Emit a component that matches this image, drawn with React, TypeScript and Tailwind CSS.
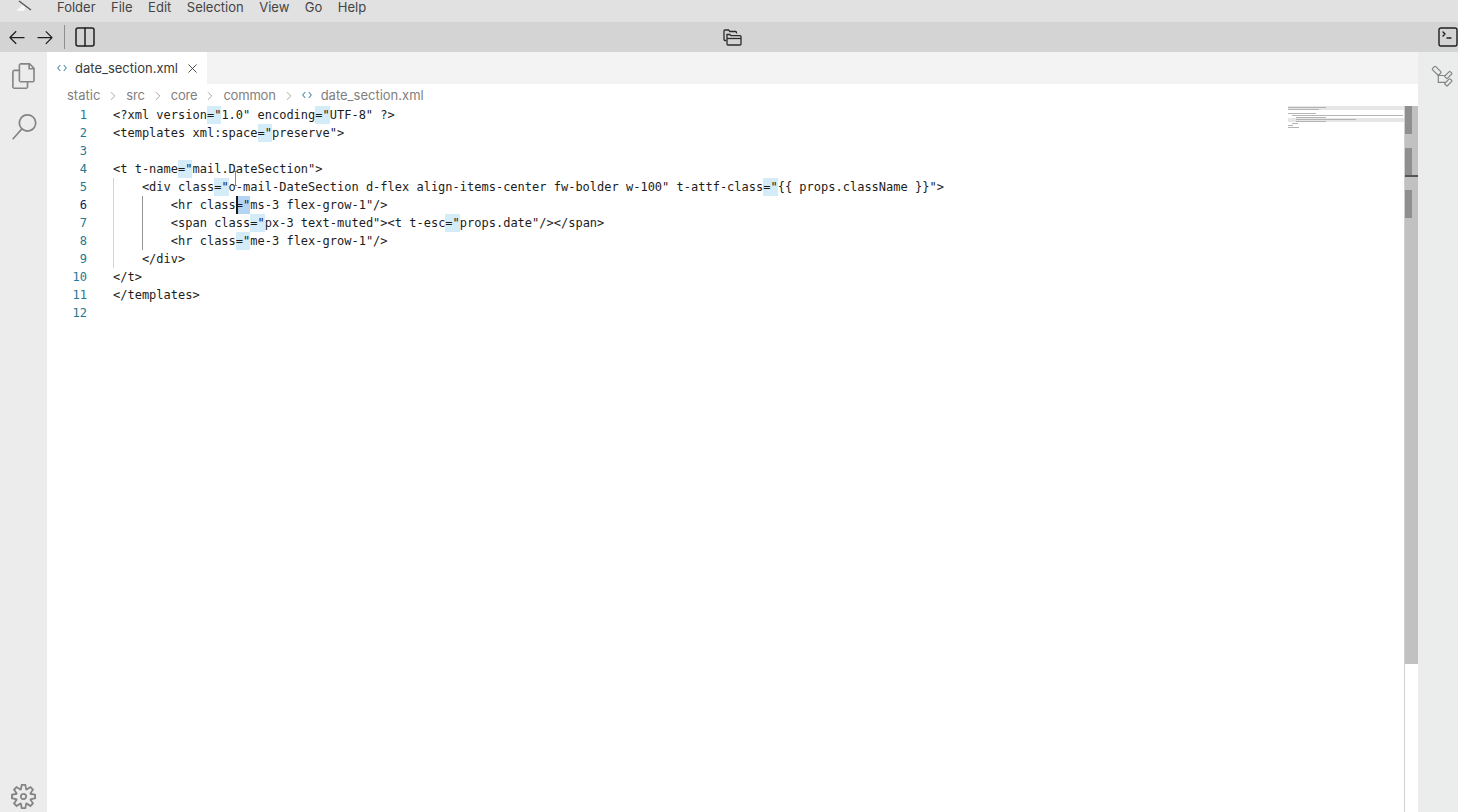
import { ChevronRight, X, Columns2, SquareTerminal } from "lucide-react";
import { VscArrowLeft, VscArrowRight, VscFiles, VscSearch, VscSettingsGear } from "react-icons/vsc";

const MENU_ITEMS = ["Folder", "File", "Edit", "Selection", "View", "Go", "Help"];
const CRUMBS = ["static", "src", "core", "common"];

// "~" marks the ="  token which gets the word highlight
const LINES = [
  `<?xml version~1.0" encoding~UTF-8" ?>`,
  `<templates xml:space~preserve">`,
  ``,
  `<t t-name~mail.DateSection">`,
  `    <div class~o-mail-DateSection d-flex align-items-center fw-bolder w-100" t-attf-class~{{ props.className }}">`,
  `        <hr class~ms-3 flex-grow-1"/>`,
  `        <span class~px-3 text-muted"><t t-esc~props.date"/></span>`,
  `        <hr class~me-3 flex-grow-1"/>`,
  `    </div>`,
  `</t>`,
  `</templates>`,
  ``,
];

const MINIMAP_ROWS = [
  "w-[38px]",
  "w-[31px]",
  "w-0",
  "w-[28px]",
  "ml-[4px] w-[111px]",
  "ml-[8px] w-[30px]",
  "ml-[8px] w-[60px]",
  "ml-[8px] w-[30px]",
  "ml-[4px] w-[6px]",
  "w-[5px]",
  "w-[11px]",
];

function CodeLine({ text, active }: { text: string; active: boolean }) {
  const parts = text.split("~");
  return (
    <span className="whitespace-pre">
      {parts.map((part, i) => (
        <span key={i}>
          {part}
          {i < parts.length - 1 && (
            <span className={active ? "bg-[#b5d3f3] inline-block h-[18px] align-top relative" : "bg-[#d4ebf8] inline-block h-[18px] align-top"}>
              {active && <span className="absolute left-0 top-0 w-[2px] h-[18px] bg-[#1a1a1a]" />}
              {'="'}
            </span>
          )}
        </span>
      ))}
    </span>
  );
}

function Minimap() {
  return (
    <div className="w-[116px] relative shrink-0">
      <div className="absolute left-0 right-0 top-0 h-[4px] bg-[#e6e6e6]" />
      <div className="absolute left-0 right-0 top-[12px] h-[4px] bg-[#e6e6e6]" />
      <div className="relative flex flex-col gap-[1px] pt-[1px]">
        {MINIMAP_ROWS.map((row, i) => (
          <div key={i} className={`${row} h-[1px] bg-[#b4b4b4]`} />
        ))}
      </div>
    </div>
  );
}

function FileCodeIcon({ className }: { className: string }) {
  return (
    <svg width="10" height="8" viewBox="0 0 10 8" fill="none" stroke="#5f97b0" strokeWidth="1.2" className={className}>
      <path d="M3.2 1 L0.8 4 L3.2 7" />
      <path d="M6.8 1 L9.2 4 L6.8 7" />
    </svg>
  );
}

function FoldersIcon() {
  return (
    <svg width="19" height="19" viewBox="0 0 19 19" fill="none" stroke="#2b2b2b" strokeWidth="1.3" className="absolute left-[723px] top-[6px]">
      <path d="M3.5 12.5H2a1 1 0 0 1-1-1V3a1 1 0 0 1 1-1h3.5l1.5 1.5h5.5a1 1 0 0 1 1 1v1" />
      <path d="M4 6.5h2.8l1.2 1.2h9a1 1 0 0 1 1 1v7.3a1 1 0 0 1-1 1H5a1 1 0 0 1-1-1Z" />
      <path d="M4 10.5h14" />
    </svg>
  );
}

function OutlineIcon() {
  return (
    <svg width="26" height="26" viewBox="0 0 26 26" fill="none" stroke="#858585" strokeWidth="1.2" className="mt-[12px] ml-[4px]">
      <rect x="5.2" y="4.45" width="9" height="4.5" rx="1" transform="rotate(45 9.7 6.7)" />
      <rect x="17.55" y="9.25" width="7.5" height="3.5" rx="1" transform="rotate(-45 21.3 11)" />
      <rect x="17.55" y="16.55" width="7.5" height="3.5" rx="1" transform="rotate(-45 21.3 18.3)" />
      <path d="M11.3 10.5V18.3H18M11.3 11.5H18" />
    </svg>
  );
}

export default function App() {
  return (
    <div className="h-[812px] w-[1458px] overflow-hidden flex flex-col bg-white font-['Inter','Liberation_Sans',sans-serif] text-[#3b3b3b]">
      {/* Menu bar */}
      <div className="h-[22px] bg-[#e1e1e1] flex items-start">
        <div className="w-[57px] shrink-0 pl-[16px]">
          <svg width="18" height="12" viewBox="0 0 18 12" fill="none">
            <path d="M1 11 Q1 8 4 8 Q5 4 8 6 Q10 8 8 11 Z" fill="#f6f6f6" />
            <path d="M3 1 L15 10" stroke="#555" strokeWidth="1.4" />
          </svg>
        </div>
        <div className="flex gap-[15.5px] text-[13px] leading-[14px] text-[#444]">
          {MENU_ITEMS.map((item) => (
            <span key={item}>{item}</span>
          ))}
        </div>
      </div>

      {/* Toolbar */}
      <div className="h-[30px] bg-[#d4d4d4] flex items-center relative">
        <div className="flex items-center pl-[7px] text-[#1f1f1f]">
          <VscArrowLeft size={20} />
          <VscArrowRight size={20} className="ml-[8px]" />
          <div className="w-[1px] h-[24px] bg-[#8f8f8f] ml-[9px]" />
          <Columns2 size={24} strokeWidth={1.5} className="ml-[8px]" />
        </div>
        <FoldersIcon />
        <SquareTerminal size={24} strokeWidth={1.4} className="absolute left-[1436px] top-[3px] text-[#1f1f1f]" />
      </div>

      <div className="flex-1 flex min-h-0">
        {/* Activity bar */}
        <div className="w-[47px] bg-[#ececec] flex flex-col items-center text-[#858585] shrink-0">
          <VscFiles size={26} className="mt-[11px]" />
          <VscSearch size={26} className="mt-[25px] ml-[1px]" />
          <VscSettingsGear size={25} className="mt-auto mb-[3px] -ml-[1px]" />
        </div>

        <div className="flex-1 flex flex-col min-w-0">
          {/* Tabs */}
          <div className="h-[32px] bg-[#f3f3f3] flex shrink-0">
            <div className="w-[160px] bg-white flex items-center pl-[10px] pt-[1px] text-[13px]">
              <FileCodeIcon className="mr-[8px] -mt-[2px]" />
              <span>date_section.xml</span>
              <X size={15} strokeWidth={1.4} className="ml-[7px] text-[#333]" />
            </div>
          </div>

          {/* Breadcrumbs */}
          <div className="h-[22px] flex items-center pl-[20px] pt-[1px] text-[13px] text-[#7f7f7f] shrink-0">
            {CRUMBS.map((crumb, i) => (
              <span key={crumb} className="flex items-center">
                <span className={i > 0 ? "tracking-[-0.2px]" : ""}>{crumb}</span>
                <ChevronRight size={14} strokeWidth={1.2} className="mx-[6px]" />
              </span>
            ))}
            <FileCodeIcon className="mr-[9px] -mt-[2px]" />
            <span>date_section.xml</span>
          </div>

          {/* Editor */}
          <div className="flex-1 flex min-h-0">
            <div className="w-[40px] shrink-0 text-right font-['DejaVu_Sans_Mono',monospace] text-[12px] leading-[18px] text-[#237893]">
              {LINES.map((_, i) => (
                <div key={i} className={i === 5 ? "text-[#0b216f]" : ""}>
                  {i + 1}
                </div>
              ))}
            </div>
            <div className="flex-1 min-w-0 relative pl-[26px] font-['DejaVu_Sans_Mono',monospace] text-[12px] leading-[18px] text-[#1c1c1c]">
              {LINES.map((line, i) => (
                <div key={i} className="h-[18px]">
                  <CodeLine text={line} active={i === 5} />
                </div>
              ))}
              {/* indent guides */}
              <div className="absolute left-[26px] top-[72px] h-[90px] w-[1px] bg-[#d3d3d3]" />
              <div className="absolute left-[55px] top-[90px] h-[54px] w-[1px] bg-[#939393]" />
              {/* mouse cursor */}
              <div className="absolute left-[148px] top-[65px] w-[1px] h-[14px] bg-[#555]/70" />
              <div className="absolute left-[147px] top-[65px] w-[3px] h-[1px] bg-[#555]/70" />
              <div className="absolute left-[147px] top-[79px] w-[3px] h-[1px] bg-[#555]/70" />
            </div>
            <Minimap />
            {/* Scrollbar */}
            <div className="w-[14px] shrink-0 relative border-l border-[#d0d0d0]">
              <div className="h-[558px] bg-[#c1c1c1]" />
              <div className="absolute left-0 w-[7px] top-0 h-[28px] bg-[#8f8f8f]" />
              <div className="absolute left-0 w-[7px] top-[42px] h-[28px] bg-[#8f8f8f]" />
              <div className="absolute left-0 right-0 top-[69px] h-[2px] bg-[#555]" />
              <div className="absolute left-0 w-[7px] top-[84px] h-[28px] bg-[#8f8f8f]" />
            </div>
          </div>
        </div>

        {/* Right bar */}
        <div className="w-[40px] bg-[#ebecec] shrink-0 flex justify-center">
          <OutlineIcon />
        </div>
      </div>
    </div>
  );
}
